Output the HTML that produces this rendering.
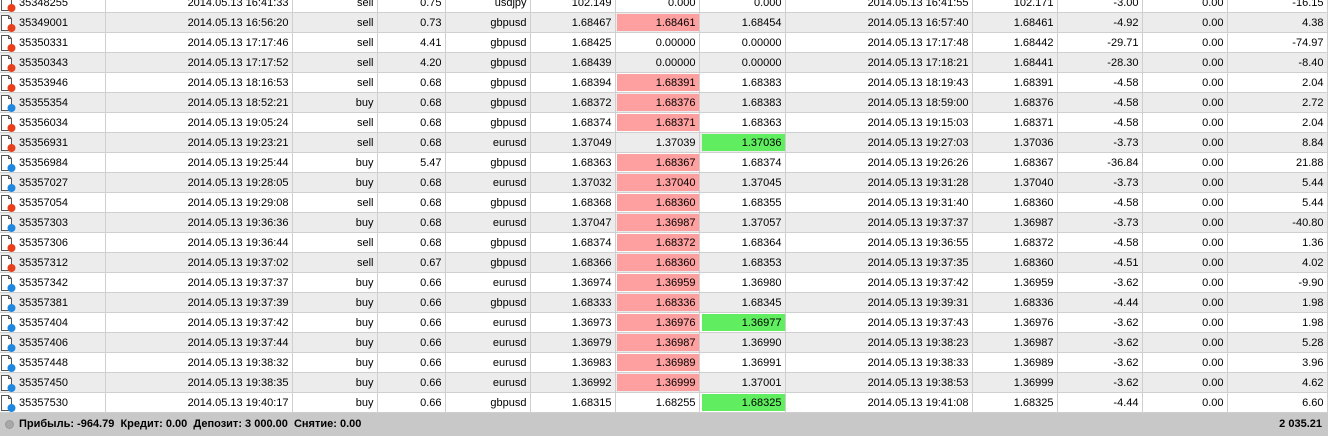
<!DOCTYPE html><html><head><meta charset="utf-8"><style>
body{margin:0;width:1328px;height:436px;overflow:hidden;background:#fff;font-family:"Liberation Sans",Tahoma,sans-serif;font-size:11px;color:#000;position:relative}
table{position:absolute;left:0;top:-7px;border-collapse:collapse;table-layout:fixed;width:1328px}
td{height:17px;padding:2px 3px 0 0;border-bottom:1px solid #cfcfcf;border-right:1px solid #cfcfcf;text-align:right;white-space:nowrap;overflow:hidden;line-height:17px;vertical-align:top}
tr:nth-child(even) td{background:#ececec}
td.id{text-align:left;padding-left:0;position:relative}
td.id span{position:absolute;left:19px;top:2px}
td.id svg{position:absolute;left:0px;top:1px}
td.p{box-shadow:inset 1px 1px 0 #fff,inset 0 -1px 0 #fff;background:#ffa0a0!important}
tr:nth-child(even) td.p{box-shadow:inset 1px 1px 0 #ececec,inset 0 -1px 0 #ececec}
td.g{box-shadow:inset 2px 1px 0 #fff,inset 0 -1px 0 #fff;background:#60ee60!important}
tr:nth-child(even) td.g{box-shadow:inset 2px 1px 0 #ececec,inset 0 -1px 0 #ececec}
.foot{position:absolute;left:0;top:413px;width:1328px;height:23px;background:#c8c8c8;font-weight:bold;line-height:22px;font-size:11px}
.foot .l{position:absolute;left:19px}
.foot .r{position:absolute;right:6px}
.foot .dot{position:absolute;left:5px;top:7px;width:7px;height:7px;border-radius:50%;background:#a8a8a8;border:1px solid #999}
</style></head><body>
<svg width="0" height="0" style="position:absolute"><defs>
<g id="pg"><path d="M1.5 1.5h7l3 3v12h-10z" fill="#fff" stroke="#555"/><path d="M8.5 1.5v3h3" fill="none" stroke="#555"/></g>
</defs></svg>
<table>
<colgroup><col style="width:105px"><col style="width:187px"><col style="width:85px"><col style="width:68px"><col style="width:85px"><col style="width:85px"><col style="width:84px"><col style="width:86px"><col style="width:187px"><col style="width:85px"><col style="width:85px"><col style="width:85px"><col style="width:100px"><col style="width:1px"></colgroup>
<tr><td class="id"><svg width="17" height="19"><use href="#pg"/><circle cx="11.5" cy="14" r="4" fill="#e8401a"/></svg><span>35348255</span></td><td>2014.05.13 16:41:33</td><td>sell</td><td>0.75</td><td>usdjpy</td><td>102.149</td><td>0.000</td><td>0.000</td><td>2014.05.13 16:41:55</td><td>102.171</td><td>-3.00</td><td>0.00</td><td>-16.15</td><td></td></tr>
<tr><td class="id"><svg width="17" height="19"><use href="#pg"/><circle cx="11.5" cy="14" r="4" fill="#e8401a"/></svg><span>35349001</span></td><td>2014.05.13 16:56:20</td><td>sell</td><td>0.73</td><td>gbpusd</td><td>1.68467</td><td class="p">1.68461</td><td>1.68454</td><td>2014.05.13 16:57:40</td><td>1.68461</td><td>-4.92</td><td>0.00</td><td>4.38</td><td></td></tr>
<tr><td class="id"><svg width="17" height="19"><use href="#pg"/><circle cx="11.5" cy="14" r="4" fill="#e8401a"/></svg><span>35350331</span></td><td>2014.05.13 17:17:46</td><td>sell</td><td>4.41</td><td>gbpusd</td><td>1.68425</td><td>0.00000</td><td>0.00000</td><td>2014.05.13 17:17:48</td><td>1.68442</td><td>-29.71</td><td>0.00</td><td>-74.97</td><td></td></tr>
<tr><td class="id"><svg width="17" height="19"><use href="#pg"/><circle cx="11.5" cy="14" r="4" fill="#e8401a"/></svg><span>35350343</span></td><td>2014.05.13 17:17:52</td><td>sell</td><td>4.20</td><td>gbpusd</td><td>1.68439</td><td>0.00000</td><td>0.00000</td><td>2014.05.13 17:18:21</td><td>1.68441</td><td>-28.30</td><td>0.00</td><td>-8.40</td><td></td></tr>
<tr><td class="id"><svg width="17" height="19"><use href="#pg"/><circle cx="11.5" cy="14" r="4" fill="#e8401a"/></svg><span>35353946</span></td><td>2014.05.13 18:16:53</td><td>sell</td><td>0.68</td><td>gbpusd</td><td>1.68394</td><td class="p">1.68391</td><td>1.68383</td><td>2014.05.13 18:19:43</td><td>1.68391</td><td>-4.58</td><td>0.00</td><td>2.04</td><td></td></tr>
<tr><td class="id"><svg width="17" height="19"><use href="#pg"/><circle cx="11.5" cy="14" r="4" fill="#1e88e0"/></svg><span>35355354</span></td><td>2014.05.13 18:52:21</td><td>buy</td><td>0.68</td><td>gbpusd</td><td>1.68372</td><td class="p">1.68376</td><td>1.68383</td><td>2014.05.13 18:59:00</td><td>1.68376</td><td>-4.58</td><td>0.00</td><td>2.72</td><td></td></tr>
<tr><td class="id"><svg width="17" height="19"><use href="#pg"/><circle cx="11.5" cy="14" r="4" fill="#e8401a"/></svg><span>35356034</span></td><td>2014.05.13 19:05:24</td><td>sell</td><td>0.68</td><td>gbpusd</td><td>1.68374</td><td class="p">1.68371</td><td>1.68363</td><td>2014.05.13 19:15:03</td><td>1.68371</td><td>-4.58</td><td>0.00</td><td>2.04</td><td></td></tr>
<tr><td class="id"><svg width="17" height="19"><use href="#pg"/><circle cx="11.5" cy="14" r="4" fill="#e8401a"/></svg><span>35356931</span></td><td>2014.05.13 19:23:21</td><td>sell</td><td>0.68</td><td>eurusd</td><td>1.37049</td><td>1.37039</td><td class="g">1.37036</td><td>2014.05.13 19:27:03</td><td>1.37036</td><td>-3.73</td><td>0.00</td><td>8.84</td><td></td></tr>
<tr><td class="id"><svg width="17" height="19"><use href="#pg"/><circle cx="11.5" cy="14" r="4" fill="#1e88e0"/></svg><span>35356984</span></td><td>2014.05.13 19:25:44</td><td>buy</td><td>5.47</td><td>gbpusd</td><td>1.68363</td><td class="p">1.68367</td><td>1.68374</td><td>2014.05.13 19:26:26</td><td>1.68367</td><td>-36.84</td><td>0.00</td><td>21.88</td><td></td></tr>
<tr><td class="id"><svg width="17" height="19"><use href="#pg"/><circle cx="11.5" cy="14" r="4" fill="#1e88e0"/></svg><span>35357027</span></td><td>2014.05.13 19:28:05</td><td>buy</td><td>0.68</td><td>eurusd</td><td>1.37032</td><td class="p">1.37040</td><td>1.37045</td><td>2014.05.13 19:31:28</td><td>1.37040</td><td>-3.73</td><td>0.00</td><td>5.44</td><td></td></tr>
<tr><td class="id"><svg width="17" height="19"><use href="#pg"/><circle cx="11.5" cy="14" r="4" fill="#e8401a"/></svg><span>35357054</span></td><td>2014.05.13 19:29:08</td><td>sell</td><td>0.68</td><td>gbpusd</td><td>1.68368</td><td class="p">1.68360</td><td>1.68355</td><td>2014.05.13 19:31:40</td><td>1.68360</td><td>-4.58</td><td>0.00</td><td>5.44</td><td></td></tr>
<tr><td class="id"><svg width="17" height="19"><use href="#pg"/><circle cx="11.5" cy="14" r="4" fill="#1e88e0"/></svg><span>35357303</span></td><td>2014.05.13 19:36:36</td><td>buy</td><td>0.68</td><td>eurusd</td><td>1.37047</td><td class="p">1.36987</td><td>1.37057</td><td>2014.05.13 19:37:37</td><td>1.36987</td><td>-3.73</td><td>0.00</td><td>-40.80</td><td></td></tr>
<tr><td class="id"><svg width="17" height="19"><use href="#pg"/><circle cx="11.5" cy="14" r="4" fill="#e8401a"/></svg><span>35357306</span></td><td>2014.05.13 19:36:44</td><td>sell</td><td>0.68</td><td>gbpusd</td><td>1.68374</td><td class="p">1.68372</td><td>1.68364</td><td>2014.05.13 19:36:55</td><td>1.68372</td><td>-4.58</td><td>0.00</td><td>1.36</td><td></td></tr>
<tr><td class="id"><svg width="17" height="19"><use href="#pg"/><circle cx="11.5" cy="14" r="4" fill="#e8401a"/></svg><span>35357312</span></td><td>2014.05.13 19:37:02</td><td>sell</td><td>0.67</td><td>gbpusd</td><td>1.68366</td><td class="p">1.68360</td><td>1.68353</td><td>2014.05.13 19:37:35</td><td>1.68360</td><td>-4.51</td><td>0.00</td><td>4.02</td><td></td></tr>
<tr><td class="id"><svg width="17" height="19"><use href="#pg"/><circle cx="11.5" cy="14" r="4" fill="#1e88e0"/></svg><span>35357342</span></td><td>2014.05.13 19:37:37</td><td>buy</td><td>0.66</td><td>eurusd</td><td>1.36974</td><td class="p">1.36959</td><td>1.36980</td><td>2014.05.13 19:37:42</td><td>1.36959</td><td>-3.62</td><td>0.00</td><td>-9.90</td><td></td></tr>
<tr><td class="id"><svg width="17" height="19"><use href="#pg"/><circle cx="11.5" cy="14" r="4" fill="#1e88e0"/></svg><span>35357381</span></td><td>2014.05.13 19:37:39</td><td>buy</td><td>0.66</td><td>gbpusd</td><td>1.68333</td><td class="p">1.68336</td><td>1.68345</td><td>2014.05.13 19:39:31</td><td>1.68336</td><td>-4.44</td><td>0.00</td><td>1.98</td><td></td></tr>
<tr><td class="id"><svg width="17" height="19"><use href="#pg"/><circle cx="11.5" cy="14" r="4" fill="#1e88e0"/></svg><span>35357404</span></td><td>2014.05.13 19:37:42</td><td>buy</td><td>0.66</td><td>eurusd</td><td>1.36973</td><td class="p">1.36976</td><td class="g">1.36977</td><td>2014.05.13 19:37:43</td><td>1.36976</td><td>-3.62</td><td>0.00</td><td>1.98</td><td></td></tr>
<tr><td class="id"><svg width="17" height="19"><use href="#pg"/><circle cx="11.5" cy="14" r="4" fill="#1e88e0"/></svg><span>35357406</span></td><td>2014.05.13 19:37:44</td><td>buy</td><td>0.66</td><td>eurusd</td><td>1.36979</td><td class="p">1.36987</td><td>1.36990</td><td>2014.05.13 19:38:23</td><td>1.36987</td><td>-3.62</td><td>0.00</td><td>5.28</td><td></td></tr>
<tr><td class="id"><svg width="17" height="19"><use href="#pg"/><circle cx="11.5" cy="14" r="4" fill="#1e88e0"/></svg><span>35357448</span></td><td>2014.05.13 19:38:32</td><td>buy</td><td>0.66</td><td>eurusd</td><td>1.36983</td><td class="p">1.36989</td><td>1.36991</td><td>2014.05.13 19:38:33</td><td>1.36989</td><td>-3.62</td><td>0.00</td><td>3.96</td><td></td></tr>
<tr><td class="id"><svg width="17" height="19"><use href="#pg"/><circle cx="11.5" cy="14" r="4" fill="#1e88e0"/></svg><span>35357450</span></td><td>2014.05.13 19:38:35</td><td>buy</td><td>0.66</td><td>eurusd</td><td>1.36992</td><td class="p">1.36999</td><td>1.37001</td><td>2014.05.13 19:38:53</td><td>1.36999</td><td>-3.62</td><td>0.00</td><td>4.62</td><td></td></tr>
<tr><td class="id"><svg width="17" height="19"><use href="#pg"/><circle cx="11.5" cy="14" r="4" fill="#1e88e0"/></svg><span>35357530</span></td><td>2014.05.13 19:40:17</td><td>buy</td><td>0.66</td><td>gbpusd</td><td>1.68315</td><td>1.68255</td><td class="g">1.68325</td><td>2014.05.13 19:41:08</td><td>1.68325</td><td>-4.44</td><td>0.00</td><td>6.60</td><td></td></tr>
</table>
<div class="foot"><div class="dot"></div><span class="l">Прибыль: -964.79&nbsp; Кредит: 0.00&nbsp; Депозит: 3 000.00&nbsp; Снятие: 0.00</span><span class="r">2 035.21</span></div>
</body></html>
